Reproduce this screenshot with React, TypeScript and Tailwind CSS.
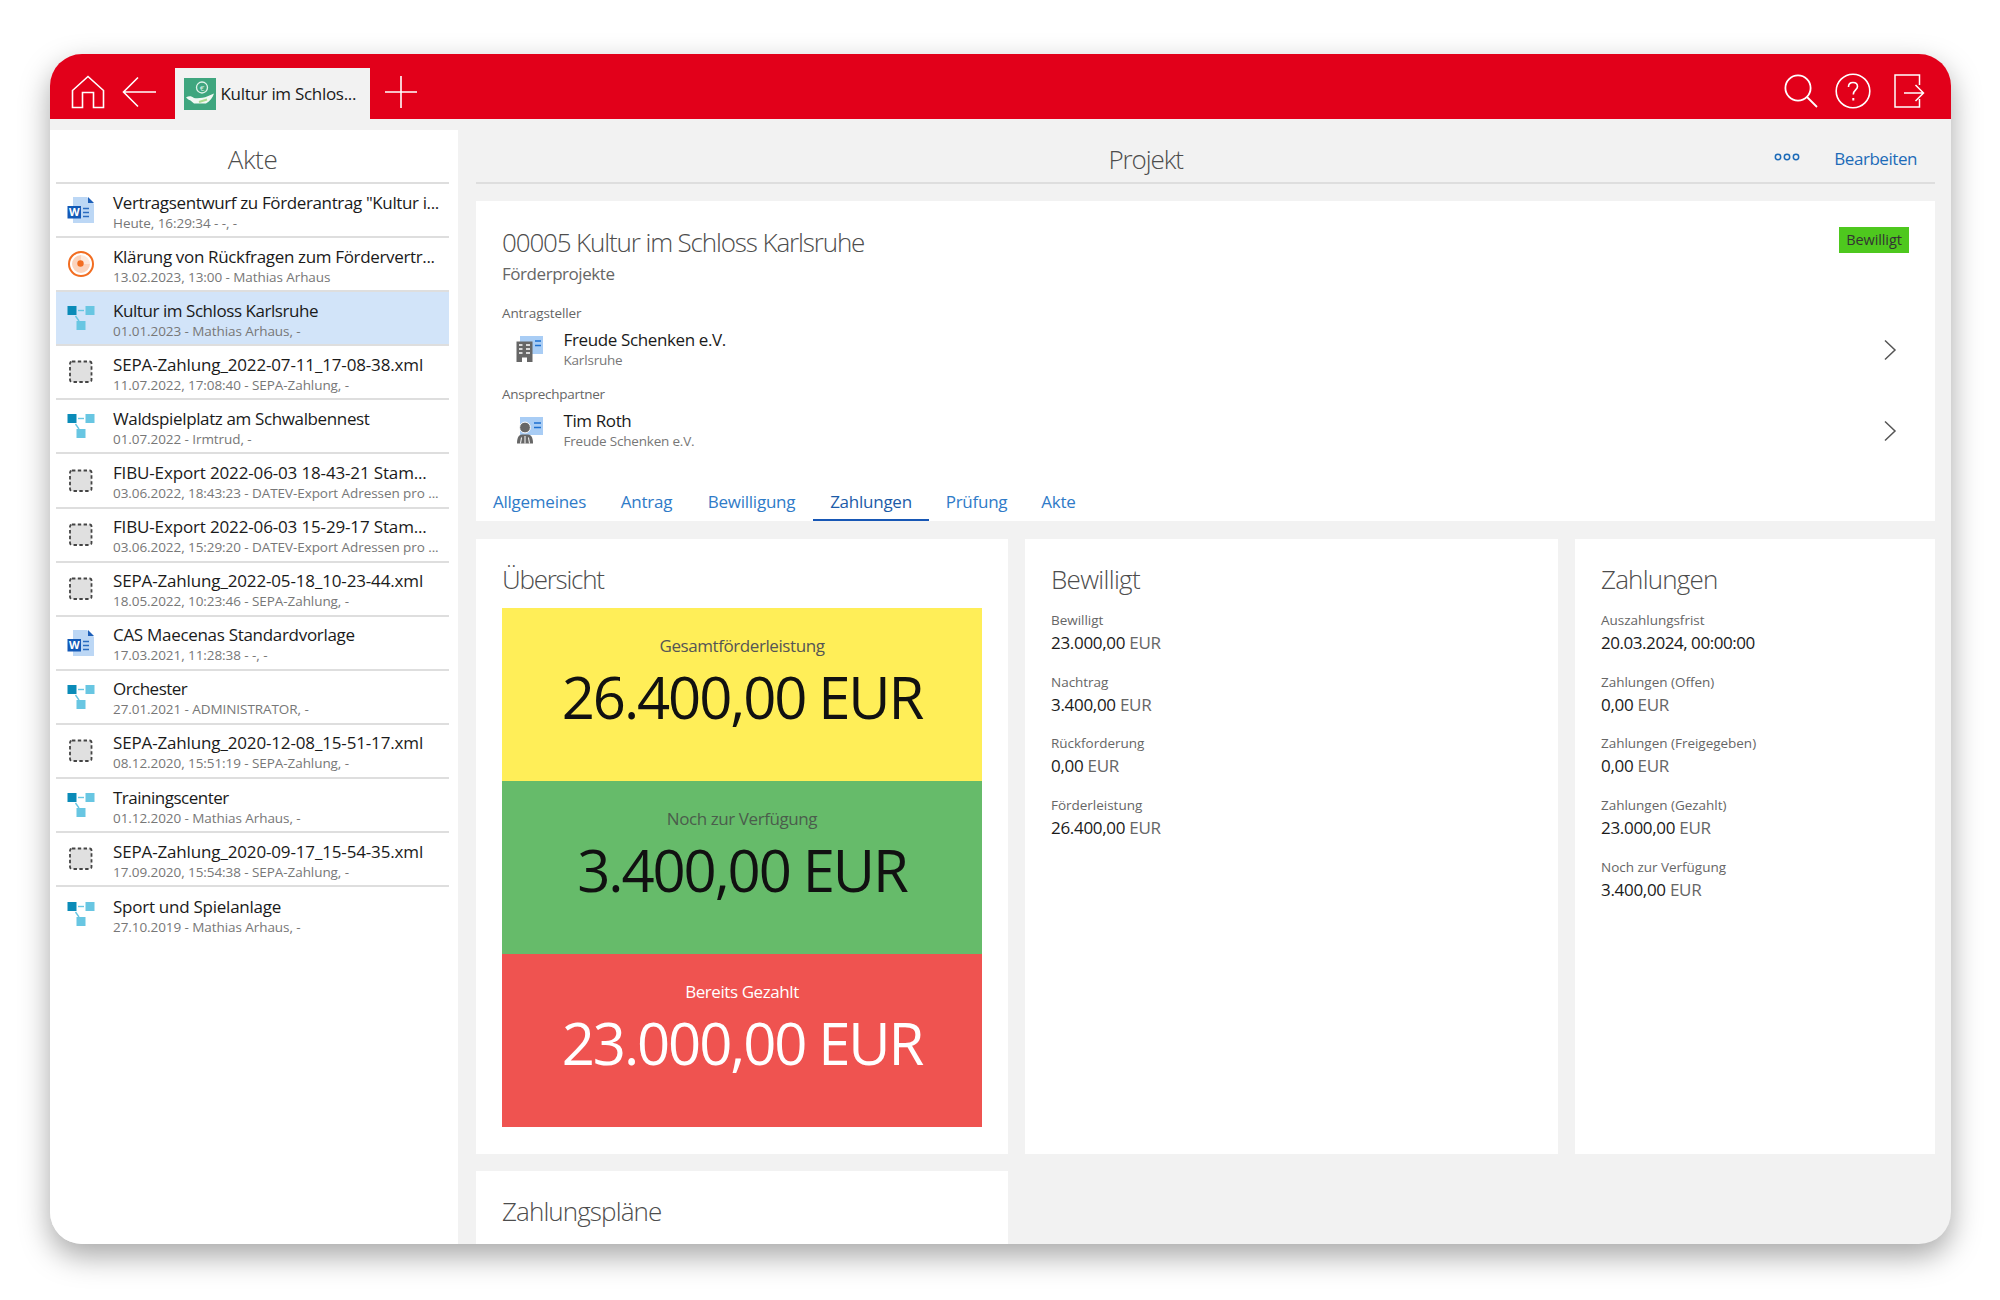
import React from "react";

const FONT = "font-['Open_Sans','Noto_Sans',sans-serif]";

function HomeIcon() {
  return (
    <svg width="34" height="34" viewBox="0 0 34 34" fill="none" stroke="#fff" strokeWidth="1.6">
      <path d="M1.5 32.5V15.5L17 1.5L32.5 15.5V32.5H22.5V17.5H11.5V32.5Z" />
    </svg>
  );
}
function BackIcon() {
  return (
    <svg width="35" height="32" viewBox="0 0 35 32" fill="none" stroke="#fff" strokeWidth="1.6">
      <path d="M34 16H2M16 1.5L1.5 16L16 30.5" />
    </svg>
  );
}
function PlusIcon() {
  return (
    <svg width="32" height="32" viewBox="0 0 32 32" fill="none" stroke="#fff" strokeWidth="1.6">
      <path d="M16 0V32M0 16H32" />
    </svg>
  );
}
function SearchIcon() {
  return (
    <svg width="34" height="34" viewBox="0 0 34 34" fill="none" stroke="#fff" strokeWidth="1.8">
      <circle cx="14" cy="14" r="12.6" />
      <path d="M23 23L33 33" />
    </svg>
  );
}
function HelpIcon() {
  return (
    <svg width="36" height="36" viewBox="0 0 36 36" fill="none" stroke="#fff" strokeWidth="1.6">
      <circle cx="18" cy="18" r="16.8" />
      <path d="M13.5 14C13.5 11 15.5 9.5 18 9.5C20.7 9.5 22.5 11.2 22.5 13.5C22.5 17 18.3 17 18.3 21.5" />
      <path d="M18.3 25V27.5" strokeWidth="2" />
    </svg>
  );
}
function LogoutIcon() {
  return (
    <svg width="31" height="34" viewBox="0 0 31 34" fill="none" stroke="#fff" strokeWidth="1.5">
      <path d="M25.5 11V1H1V33H25.5V25" />
      <path d="M10 19H29M21.5 11L29.5 19L21.5 27" />
    </svg>
  );
}
function TabLogo() {
  return (
    <svg width="32" height="32" viewBox="0 0 32 32">
      <rect width="32" height="32" fill="#3fa67f" />
      <circle cx="18" cy="9.5" r="5.5" fill="none" stroke="#dff3ea" strokeWidth="1.3" />
      <text x="18" y="12.5" fontSize="8" fill="#dff3ea" textAnchor="middle" fontFamily="Open Sans">€</text>
      <path d="M2 19.5C5 17.5 7.5 18 10 20C14 20.5 20 20 23 18.5L30 15.5C29 19 26 23 22 25.5H10L6.5 22.5C5 22 3.5 21 2 19.5Z" fill="#f1f8f4" />
      <path d="M15 24L23 21.5" stroke="#a9dc8f" strokeWidth="2" />
    </svg>
  );
}
function WordIcon() {
  return (
    <svg width="28" height="28" viewBox="0 0 28 28">
      <path d="M6 1H20L27 8V27H6Z" fill="#bcd7f5" />
      <path d="M21 1L27 7H21Z" fill="#1d5fb8" />
      <rect x="0.5" y="10" width="13.5" height="12.5" fill="#1259b7" />
      <text x="7.2" y="20.3" fontSize="11" fontWeight="700" fill="#fff" textAnchor="middle" fontFamily="Open Sans">W</text>
      <path d="M16 12.5H22M16 16.5H22M16 20.5H22" stroke="#2a6bc0" strokeWidth="1.5" />
    </svg>
  );
}
function TaskIcon() {
  return (
    <svg width="28" height="28" viewBox="0 0 28 28">
      <circle cx="14" cy="14" r="12" fill="#fff" stroke="#f26d21" strokeWidth="2" />
      <path d="M14 5A9 9 0 1 0 23 14H14Z" fill="#fbd3bc" />
      <path d="M14 5A9 9 0 0 1 23 14H14Z" fill="#fde9dd" />
      <circle cx="13.5" cy="13.5" r="3.2" fill="#f26d21" />
    </svg>
  );
}
function ProcessIcon() {
  return (
    <svg width="28" height="28" viewBox="0 0 28 28">
      <rect x="0.5" y="2" width="9" height="9" fill="#0a8bb8" />
      <rect x="18.5" y="2" width="9" height="9" fill="#68c6e2" />
      <rect x="9.5" y="17" width="9" height="9" fill="#68c6e2" />
      <path d="M11 6.5H17" stroke="#68c6e2" strokeWidth="1.4" />
      <path d="M8.5 12L12 17" stroke="#68c6e2" strokeWidth="1.4" />
    </svg>
  );
}
function FileIcon() {
  return (
    <svg width="28" height="28" viewBox="0 0 28 28">
      <rect x="3" y="3.5" width="21.5" height="20.5" rx="2" fill="#e0e0e0" stroke="#444" strokeWidth="1.8" strokeDasharray="3.4 2.4" />
    </svg>
  );
}
function CompanyIcon() {
  return (
    <svg width="28" height="28" viewBox="0 0 28 28">
      <path d="M4 0H27V18H14V6H4Z" fill="#a9cdf5" />
      <path d="M19 5H25M19 9.5H25" stroke="#1d6fd0" strokeWidth="1.5" />
      <path d="M0.5 5.5H16.5V26H11V21.5H6V26H0.5Z" fill="#666" />
      <path d="M3 9H6.5M10 9H14M3 13H6.5M10 13H14M3 17H6.5M10 17H14" stroke="#fff" strokeWidth="1.6" />
    </svg>
  );
}
function PersonIcon() {
  return (
    <svg width="28" height="28" viewBox="0 0 28 28">
      <path d="M4 0H27V18H4Z" fill="#a9cdf5" />
      <path d="M18 6H25M18 10.5H25" stroke="#1d6fd0" strokeWidth="1.5" />
      <circle cx="9" cy="10.5" r="5.4" fill="#666" stroke="#fff" strokeWidth="1" />
      <path d="M1 26.5C1 21 2.5 17.5 6 17.5H12C15.5 17.5 17 21 17 26.5Z" fill="#666" />
      <path d="M9 19V26.5M5.5 20.5L4.5 26.5M12.5 20.5L13.5 26.5" stroke="#fff" strokeWidth="1" />
    </svg>
  );
}
function Chevron() {
  return (
    <svg width="14" height="22" viewBox="0 0 14 22" fill="none" stroke="#555" strokeWidth="1.5">
      <path d="M2 1.5L12 11L2 20.5" />
    </svg>
  );
}

type Kind = "word" | "task" | "process" | "file";
const ICONS: Record<Kind, React.ReactNode> = {
  word: <WordIcon />,
  task: <TaskIcon />,
  process: <ProcessIcon />,
  file: <FileIcon />,
};

const ROWS: { k: Kind; t: string; s: string; tr: string; sel?: boolean }[] = [
  { k: "word", t: 'Vertragsentwurf zu Förderantrag "Kultur i...', s: "Heute, 16:29:34 - -, -", tr: "tracking-[-0.37px]" },
  { k: "task", t: "Klärung von Rückfragen zum Fördervertr...", s: "13.02.2023, 13:00 - Mathias Arhaus", tr: "tracking-[-0.34px]" },
  { k: "process", t: "Kultur im Schloss Karlsruhe", s: "01.01.2023 - Mathias Arhaus, -", tr: "tracking-[-0.44px]", sel: true },
  { k: "file", t: "SEPA-Zahlung_2022-07-11_17-08-38.xml", s: "11.07.2022, 17:08:40 - SEPA-Zahlung, -", tr: "tracking-[-0.15px]" },
  { k: "process", t: "Waldspielplatz am Schwalbennest", s: "01.07.2022 - Irmtrud, -", tr: "tracking-[-0.37px]" },
  { k: "file", t: "FIBU-Export 2022-06-03 18-43-21 Stam...", s: "03.06.2022, 18:43:23 - DATEV-Export Adressen pro ...", tr: "tracking-[-0.15px]" },
  { k: "file", t: "FIBU-Export 2022-06-03 15-29-17 Stam...", s: "03.06.2022, 15:29:20 - DATEV-Export Adressen pro ...", tr: "tracking-[-0.15px]" },
  { k: "file", t: "SEPA-Zahlung_2022-05-18_10-23-44.xml", s: "18.05.2022, 10:23:46 - SEPA-Zahlung, -", tr: "tracking-[-0.15px]" },
  { k: "word", t: "CAS Maecenas Standardvorlage", s: "17.03.2021, 11:28:38 - -, -", tr: "tracking-[-0.3px]" },
  { k: "process", t: "Orchester", s: "27.01.2021 - ADMINISTRATOR, -", tr: "tracking-[-0.53px]" },
  { k: "file", t: "SEPA-Zahlung_2020-12-08_15-51-17.xml", s: "08.12.2020, 15:51:19 - SEPA-Zahlung, -", tr: "tracking-[-0.15px]" },
  { k: "process", t: "Trainingscenter", s: "01.12.2020 - Mathias Arhaus, -", tr: "tracking-[-0.5px]" },
  { k: "file", t: "SEPA-Zahlung_2020-09-17_15-54-35.xml", s: "17.09.2020, 15:54:38 - SEPA-Zahlung, -", tr: "tracking-[-0.15px]" },
  { k: "process", t: "Sport und Spielanlage", s: "27.10.2019 - Mathias Arhaus, -", tr: "tracking-[-0.25px]" },
];

function Row({ k, t, s, tr, sel, last }: { k: Kind; t: string; s: string; tr: string; sel?: boolean; last?: boolean }) {
  return (
    <div className={`flex h-[54.1px] items-center pl-[11px] ${sel ? "bg-[#d2e4f9]" : ""} ${last ? "" : "border-b-2 border-[#dedede]"}`}>
      <div className="w-[28px] shrink-0">{ICONS[k]}</div>
      <div className="ml-[18px] mt-[4px] min-w-0">
        <div className={`whitespace-nowrap text-[17px] leading-[21px] text-[#1a1a1a] ${tr}`}>{t}</div>
        <div className="whitespace-nowrap text-[13.5px] leading-[20px] tracking-[-0.07px] text-[#777]">{s}</div>
      </div>
    </div>
  );
}

function Contact({ label, labelTr, icon, name, sub, nameTr }: { label: string; labelTr: string; icon: React.ReactNode; name: string; sub: string; nameTr: string }) {
  return (
    <div className="pl-[26px] pr-[38px]">
      <div className={`text-[13.5px] leading-[20px] text-[#666] ${labelTr}`}>{label}</div>
      <div className="mt-[6px] flex h-[42px] items-center">
        <div className="ml-[14px] w-[28px]">{icon}</div>
        <div className="ml-[19.5px] flex-1">
          <div className={`text-[17px] leading-[21px] text-[#1a1a1a] ${nameTr}`}>{name}</div>
          <div className="text-[13.5px] leading-[21px] tracking-[-0.2px] text-[#777]">{sub}</div>
        </div>
        <Chevron />
      </div>
    </div>
  );
}

function Block({ bg, label, labelCls, value, valueCls }: { bg: string; label: string; labelCls: string; value: string; valueCls: string }) {
  return (
    <div className={`flex h-[173px] flex-col items-center pt-[28px] ${bg}`}>
      <div className={`text-[17px] leading-[20px] tracking-[-0.42px] ${labelCls}`}>{label}</div>
      <div className={`mt-[6px] whitespace-nowrap text-[58px] leading-[70px] tracking-[-2.1px] ${valueCls}`}>{value}</div>
    </div>
  );
}

function Field({ label, value, unit, tr }: { label: string; value: string; unit?: string; tr?: string }) {
  return (
    <div className="mb-[16.7px]">
      <div className="text-[13.5px] leading-[20px] tracking-[-0.02px] text-[#666]">{label}</div>
      <div className={`mt-[1px] text-[17px] leading-[24px] text-[#1a1a1a] ${tr ?? "tracking-[-0.3px]"}`}>
        {value}
        {unit && <span className="text-[#666]"> {unit}</span>}
      </div>
    </div>
  );
}

const H2 = "text-[26px] leading-[36px] font-light text-[#4d4d4d]";

const TABS = [
  { t: "Allgemeines", w: "w-[127px]" },
  { t: "Antrag", w: "w-[87px]" },
  { t: "Bewilligung", w: "w-[123px]" },
  { t: "Zahlungen", w: "w-[116px]" },
  { t: "Prüfung", w: "w-[95px]" },
  { t: "Akte", w: "w-[69px]" },
];

export default function App() {
  return (
    <div className={`h-[1300px] w-[2000px] overflow-hidden bg-white pl-[50px] pt-[54px] ${FONT}`}>
      <div className="flex h-[1190px] w-[1901px] flex-col overflow-hidden rounded-[32px] bg-[#f2f2f2] shadow-[0_12px_30px_rgba(0,0,0,0.35)]">
        <header className="flex h-[65px] shrink-0 items-end bg-[#e2001a]">
          <div className="mb-[10px] ml-[21px] flex items-center">
            <HomeIcon />
            <div className="ml-[17px]"><BackIcon /></div>
          </div>
          <div className="ml-[17.5px] flex h-[51px] w-[195px] items-center bg-[#f2f2f2] pl-[9px]">
            <TabLogo />
            <span className="ml-[5px] whitespace-nowrap text-[17px] tracking-[-0.3px] text-[#1a1a1a]">Kultur im Schlos...</span>
          </div>
          <div className="mb-[11px] ml-[15px]"><PlusIcon /></div>
          <div className="mb-[10px] ml-auto mr-[26px] flex items-center">
            <SearchIcon />
            <div className="ml-[17.5px]"><HelpIcon /></div>
            <div className="ml-[23px]"><LogoutIcon /></div>
          </div>
        </header>

        <div className="flex min-h-0 flex-1">
          <aside className="mt-[11px] w-[408px] shrink-0 bg-white pl-[6px] pr-[9px]">
            <div className="flex h-[54px] items-center justify-center border-b-2 border-[#dedede] pt-[6px] text-[26px] font-light tracking-[-0.4px] text-[#4d4d4d]">Akte</div>
            {ROWS.map((r, i) => (
              <Row key={i} {...r} last={i === ROWS.length - 1} />
            ))}
          </aside>

          <main className="ml-[18px] mt-[11px] w-[1459px] shrink-0 overflow-hidden">
            <div className="flex h-[54px] items-center border-b-2 border-[#dedede] pt-[6px]">
              <div className="flex-1 pl-[41px] text-center text-[26px] font-light tracking-[-1.1px] text-[#4d4d4d]">Projekt</div>
              <svg width="26" height="8" viewBox="0 0 26 8" fill="none" stroke="#1d6bb8" strokeWidth="1.5" className="-mt-[4px]">
                <circle cx="4" cy="4" r="2.7" />
                <circle cx="13" cy="4" r="2.7" />
                <circle cx="22" cy="4" r="2.7" />
              </svg>
              <div className="ml-[34px] mr-[18px] text-[17px] tracking-[-0.45px] text-[#1d6bb8]">Bearbeiten</div>
            </div>

            <section className="mt-[17px] flex h-[320px] flex-col bg-white">
              <div className="flex items-start justify-between pl-[26px] pr-[26px] pt-[23px]">
                <div>
                  <div className={`${H2} tracking-[-1.14px]`}>00005 Kultur im Schloss Karlsruhe</div>
                  <div className="mt-[2px] text-[17px] leading-[24px] tracking-[-0.45px] text-[#666]">Förderprojekte</div>
                </div>
                <div className="mt-[3px] flex h-[26px] w-[70px] items-center justify-center bg-[#4ec81e] text-[14.5px] tracking-[-0.1px] text-[#333]">Bewilligt</div>
              </div>
              <div className="mt-[17px]">
                <Contact label="Antragsteller" labelTr="tracking-[-0.1px]" icon={<CompanyIcon />} name="Freude Schenken e.V." nameTr="tracking-[-0.37px]" sub="Karlsruhe" />
              </div>
              <div className="mt-[13px]">
                <Contact label="Ansprechpartner" labelTr="tracking-[-0.27px]" icon={<PersonIcon />} name="Tim Roth" nameTr="tracking-[-0.4px]" sub="Freude Schenken e.V." />
              </div>
              <nav className="mt-auto flex">
                {TABS.map(({ t, w }) => (
                  <div
                    key={t}
                    className={`flex h-[36px] items-center justify-center border-b-2 text-[17px] tracking-[-0.25px] ${w} ${t === "Zahlungen" ? "border-[#1757b5] text-[#1c5ba8]" : "border-transparent text-[#2f7bc8]"}`}
                  >
                    {t}
                  </div>
                ))}
              </nav>
            </section>

            <div className="mt-[18px] grid h-[615px] grid-cols-[532px_533px_360px] gap-x-[17px]">
              <section className="bg-white px-[26px] pt-[22px]">
                <div className={`${H2} tracking-[-1.25px]`}>Übersicht</div>
                <div className="mt-[11px]">
                  <Block bg="bg-[#ffee58]" label="Gesamtförderleistung" labelCls="text-[#555]" value="26.400,00 EUR" valueCls="text-[#111]" />
                  <Block bg="bg-[#66bb6a]" label="Noch zur Verfügung" labelCls="text-[#4b5d4c]" value="3.400,00 EUR" valueCls="text-[#111]" />
                  <Block bg="bg-[#ef5350]" label="Bereits Gezahlt" labelCls="text-white" value="23.000,00 EUR" valueCls="text-white" />
                </div>
              </section>
              <section className="bg-white px-[26px] pt-[22px]">
                <div className={`${H2} tracking-[-0.68px]`}>Bewilligt</div>
                <div className="mt-[13px]">
                  <Field label="Bewilligt" value="23.000,00" unit="EUR" />
                  <Field label="Nachtrag" value="3.400,00" unit="EUR" />
                  <Field label="Rückforderung" value="0,00" unit="EUR" />
                  <Field label="Förderleistung" value="26.400,00" unit="EUR" />
                </div>
              </section>
              <section className="bg-white px-[26px] pt-[22px]">
                <div className={`${H2} tracking-[-0.82px]`}>Zahlungen</div>
                <div className="mt-[13px]">
                  <Field label="Auszahlungsfrist" value="20.03.2024, 00:00:00" tr="tracking-[-0.45px]" />
                  <Field label="Zahlungen (Offen)" value="0,00" unit="EUR" />
                  <Field label="Zahlungen (Freigegeben)" value="0,00" unit="EUR" />
                  <Field label="Zahlungen (Gezahlt)" value="23.000,00" unit="EUR" />
                  <Field label="Noch zur Verfügung" value="3.400,00" unit="EUR" />
                </div>
              </section>
            </div>

            <section className="mt-[17px] h-[100px] w-[532px] bg-white px-[26px] pt-[22px]">
              <div className={`${H2} tracking-[-0.9px]`}>Zahlungspläne</div>
            </section>
          </main>
        </div>
      </div>
    </div>
  );
}
